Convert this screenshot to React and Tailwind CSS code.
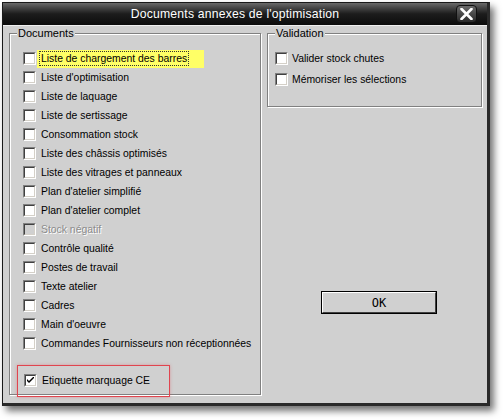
import React from "react";

const docs = [
  { label: "Liste de chargement des barres", focus: true },
  { label: "Liste d'optimisation" },
  { label: "Liste de laquage" },
  { label: "Liste de sertissage" },
  { label: "Consommation stock" },
  { label: "Liste des châssis optimisés" },
  { label: "Liste des vitrages et panneaux" },
  { label: "Plan d'atelier simplifié" },
  { label: "Plan d'atelier complet" },
  { label: "Stock négatif", disabled: true },
  { label: "Contrôle qualité" },
  { label: "Postes de travail" },
  { label: "Texte atelier" },
  { label: "Cadres" },
  { label: "Main d'oeuvre" },
  { label: "Commandes Fournisseurs non réceptionnées" },
];

function Check({ checked, disabled }) {
  return (
    <span className="block w-[13px] h-[13px] shrink-0 border border-t-[#808080] border-l-[#808080] border-r-white border-b-white">
      <span
        className={`flex items-center justify-center w-full h-full border border-t-[#404040] border-l-[#404040] border-r-[#d4d0c8] border-b-[#d4d0c8] ${
          disabled ? "bg-[#d0d0d0]" : "bg-white"
        }`}
      >
        {checked && (
          <svg width="7" height="7" viewBox="0 0 7 7">
            <path d="M0 2 L0 4 L2 6 L7 1 L7 -1 L2 4 Z" fill="#000" />
          </svg>
        )}
      </span>
    </span>
  );
}

function Row({ label, focus, disabled, checked }) {
  return (
    <div className="h-[19px] flex items-center whitespace-nowrap">
      <Check checked={checked} disabled={disabled} />
      {focus ? (
        <span className="ml-[1px] h-[18px] w-[167px] bg-[#ffff66] flex items-center pl-[2px]">
          <span className="border border-dotted border-[#333] px-[1px] leading-[13px]">{label}</span>
        </span>
      ) : (
        <span
          className={`ml-[5px] ${
            disabled ? "text-[#8c8c8c] [text-shadow:1px_1px_0_#fff]" : "text-black"
          }`}
        >
          {label}
        </span>
      )}
    </div>
  );
}

export default function App() {
  return (
    <div className="w-[503px] h-[420px] bg-white pl-[2px] pt-[2px] font-['Liberation_Sans',Arial,sans-serif] text-[10.4px] relative">
      <div className="w-[488px] h-[404px] flex flex-col border border-[#1a1a1a] border-b-[3px] border-r-[3px] border-r-[#2a2a2a] border-b-[#2a2a2a] shadow-[4px_5px_7px_rgba(0,0,0,0.55)]">
        {/* Title bar */}
        <div className="h-[22px] shrink-0 relative flex items-center justify-center pr-[20px] bg-gradient-to-b from-[#6a6a6a] via-[#1c1c1c] to-[#0c0c0c] text-white text-[12.2px] tracking-[0.2px]">
          Documents annexes de l'optimisation
          <div className="absolute right-[10px] top-[2px] w-[21px] h-[18px] rounded-[4px] bg-gradient-to-b from-[#6a6a6a] to-[#2a2a2a] border border-[#111] flex items-center justify-center">
            <svg width="13" height="12" viewBox="0 0 13 12">
              <path d="M1.5 1 L11.5 11 M11.5 1 L1.5 11" stroke="#fff" strokeWidth="2.6" strokeLinecap="round" />
            </svg>
          </div>
        </div>

        {/* Body */}
        <div className="flex-1 bg-[#d0d0d0] border-t border-[#f0f0f0] flex gap-[6px] pl-[6px] pr-[5px]">
          <fieldset className="w-[252px] h-[369px] border border-[#808080] shadow-[inset_1px_1px_0_#fff,1px_1px_0_#fff] pl-[13px] pt-[9px]">
            <legend className="-ml-[6px] px-[1px] bg-[#d0d0d0] leading-[14px] text-[11px]">Documents</legend>
            {docs.map((d) => (
              <Row key={d.label} {...d} />
            ))}
            <div className="mt-[18px] pl-[1px]">
              <Row label="Etiquette marquage CE" checked />
            </div>
          </fieldset>

          <div className="flex-1 flex flex-col">
            <fieldset className="h-[81px] border border-[#808080] shadow-[inset_1px_1px_0_#fff,1px_1px_0_#fff] pl-[7px] pt-[8px]">
              <legend className="ml-0 px-[1px] bg-[#d0d0d0] leading-[14px] text-[11px]">Validation</legend>
              <div className="h-[21px] flex items-center">
                <Check />
                <span className="ml-[4px]">Valider stock chutes</span>
              </div>
              <div className="h-[21px] flex items-center">
                <Check />
                <span className="ml-[4px]">Mémoriser les sélections</span>
              </div>
            </fieldset>
            <div className="mt-[184px] pl-[54px]">
              <button className="w-[116px] h-[23px] border border-black bg-[#d0d0d0] flex">
                <span className="flex-1 flex items-center justify-center border border-t-white border-l-white border-r-[#404040] border-b-[#404040] text-[12px] font-['DejaVu_Sans_Mono',monospace] text-black">
                  OK
                </span>
              </button>
            </div>
          </div>
        </div>
      </div>

      {/* annotation highlight */}
      <div className="absolute left-[17px] top-[365px] w-[153px] h-[32px] border border-[#e0454f] shadow-[0_0_3px_rgba(224,69,79,0.4)]" />
    </div>
  );
}
